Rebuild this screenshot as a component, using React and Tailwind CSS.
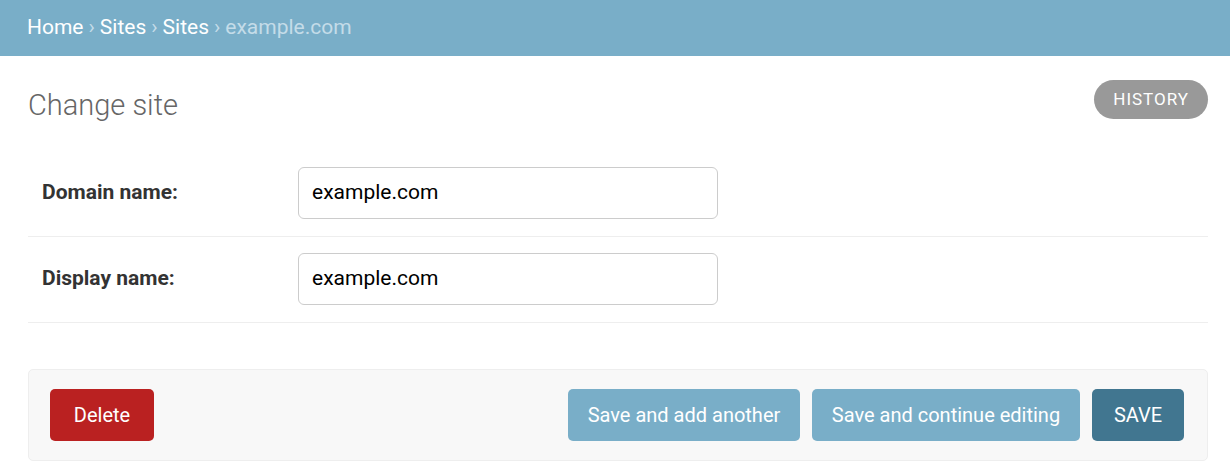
export default function App() {
  const font = { fontFamily: 'Roboto, "Noto Sans", sans-serif' };
  return (
    <div className="w-[1230px] h-[476px] bg-white overflow-hidden" style={font}>
      <div className="h-[56px] bg-[#79aec8] pl-[27px] flex items-center text-[21px] text-white">
        <span>Home</span>
        <span className="mx-[5px] text-[#c4dce8]">›</span>
        <span>Sites</span>
        <span className="mx-[5px] text-[#c4dce8]">›</span>
        <span>Sites</span>
        <span className="mx-[5px] text-[#c4dce8]">›</span>
        <span className="text-[#c4dce8]">example.com</span>
      </div>
      <div className="pl-[28px] pr-[22px]">
        <div className="flex items-start justify-between pt-[24px] h-[95px]">
          <h1 className="text-[29px] leading-none font-light text-[#666] mt-[11px]">Change site</h1>
          <div className="h-[39px] px-[19px] rounded-full bg-[#999] text-white text-[17px] tracking-[1px] flex items-center font-normal">
            HISTORY
          </div>
        </div>
        <div>
          {['Domain name:', 'Display name:'].map((l) => (
            <div key={l} className="flex items-center pl-[14px] pt-[16px] pb-[17px] border-b border-[#eee]">
              <label className="w-[256px] text-[21px] font-bold text-[#333]">{l}</label>
              <div className="w-[420px] h-[52px] border border-[#ccc] rounded-[6px] flex items-center pl-[13px] text-[21px] text-black">
                example.com
              </div>
            </div>
          ))}
        </div>
        <div className="mt-[46px] h-[92px] bg-[#f8f8f8] border border-[#eee] rounded-[5px] flex items-center pl-[21px] pr-[23px] gap-[12px]">
          <div className="h-[52px] w-[104px] rounded-[5px] bg-[#ba2121] text-white text-[20px] flex items-center justify-center mr-auto">Delete</div>
          <div className="h-[52px] w-[232px] rounded-[5px] bg-[#79aec8] text-white text-[20px] flex items-center justify-center">Save and add another</div>
          <div className="h-[52px] w-[268px] rounded-[5px] bg-[#79aec8] text-white text-[20px] flex items-center justify-center">Save and continue editing</div>
          <div className="h-[52px] w-[92px] rounded-[5px] bg-[#417690] text-white text-[20px] flex items-center justify-center">SAVE</div>
        </div>
      </div>
    </div>
  );
}
